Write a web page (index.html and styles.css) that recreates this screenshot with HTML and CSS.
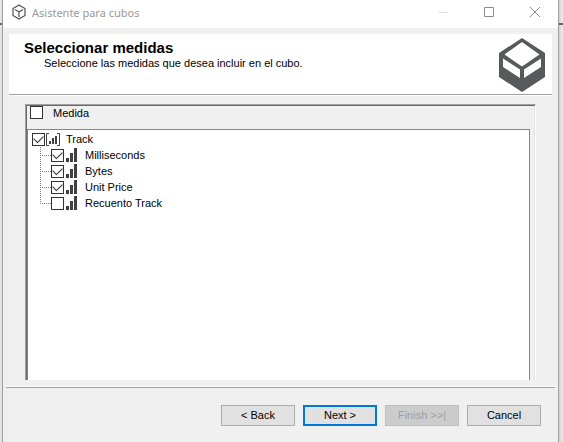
FILE: index.html
```html
<!DOCTYPE html>
<html lang="es">
<head>
<meta charset="utf-8">
<title>Asistente para cubos</title>
<link rel="stylesheet" href="styles.css">
</head>
<body>
<svg class="defs" aria-hidden="true">
  <symbol id="bars" viewBox="0 0 11 14"><path d="M0 10h3v4H0zM4 5h3v9H4zM8 0h3v14H8z" fill="#404040"/></symbol>
</svg>
<main class="window">
  <header class="titlebar">
    <svg class="app-icon" viewBox="0 0 14 16" aria-hidden="true"><path d="M7 1l6 3.500v7L7 15l-6-3.500v-7zM3 5.500L7 8l4-2.500M7 8v5" fill="none" stroke="#505050" stroke-width="1.200"/></svg>
    <h1 class="caption">Asistente para cubos</h1>
    <button class="sys" aria-label="Minimizar" disabled><svg viewBox="0 0 12 12"><path d="M1 6.500h10" stroke="#e2e2e2"/></svg></button>
    <button class="sys" aria-label="Maximizar"><svg viewBox="0 0 12 12"><path d="M1.500 1.500h9v9h-9z" fill="none" stroke="#8c8c8c"/></svg></button>
    <button class="sys" aria-label="Cerrar"><svg viewBox="0 0 12 12"><path d="M1 1l10 10M11 1L1 11" stroke="#8c8c8c"/></svg></button>
  </header>
  <section class="banner">
    <div class="banner-text">
      <h2>Seleccionar medidas</h2>
      <p>Seleccione las medidas que desea incluir en el cubo.</p>
    </div>
    <svg class="logo" viewBox="0 0 46 54" aria-hidden="true"><path d="M23 0l23 15v24L23 54 0 39V15z" fill="#58595b"/><path d="M23 4l17.500 12.500L23 28.500 5.500 16.500zM4 20.500l17 11V40L4 29zM42 20.500l-17 11V40l17-11z" fill="#fff"/></svg>
  </section>
  <section class="panel">
    <label class="panel-head"><input type="checkbox"><span>Medida</span></label>
    <div class="tree">
      <label class="node"><input type="checkbox" checked><svg class="group-icon" viewBox="0 0 15 13" aria-hidden="true"><path d="M3 .5H.5v12H3M11 .5h2.500v12H11" fill="none" stroke="#404040"/><path d="M3 8h2v3H3zM6 5h2v6H6zM9 3h2v8H9z" fill="#404040"/></svg><span>Track</span></label>
      <ul>
        <li><label class="node"><input type="checkbox" checked><svg class="bar-icon" aria-hidden="true"><use href="#bars"/></svg><span>Milliseconds</span></label></li>
        <li><label class="node"><input type="checkbox" checked><svg class="bar-icon" aria-hidden="true"><use href="#bars"/></svg><span>Bytes</span></label></li>
        <li><label class="node"><input type="checkbox" checked><svg class="bar-icon" aria-hidden="true"><use href="#bars"/></svg><span>Unit Price</span></label></li>
        <li><label class="node"><input type="checkbox"><svg class="bar-icon" aria-hidden="true"><use href="#bars"/></svg><span>Recuento Track</span></label></li>
      </ul>
    </div>
  </section>
  <footer class="actions">
    <button>&lt; Back</button>
    <button class="primary">Next &gt;</button>
    <button disabled>Finish &gt;&gt;|</button>
    <button>Cancel</button>
  </footer>
</main>
</body>
</html>
```
FILE: styles.css
```css
* { box-sizing: border-box; }

body {
  margin: 0;
  padding: 0 4px 0 2px;
  min-height: 100vh;
  display: flex;
  background: linear-gradient(#666, #666) 0 23px / 100% 2px no-repeat, linear-gradient(to left, #f0f0f0, #d0d0d0 4px, #e4e4e4 8px);
  font: 11px/13px "Liberation Sans", Arial, sans-serif;
  color: #000;
}

h1, h2, p, ul { margin: 0; padding: 0; }
ul { list-style: none; }
svg { display: block; flex: none; }
.defs { display: none; }

.window {
  flex: 1;
  display: flex;
  flex-direction: column;
  background: #f0f0f0;
  border: solid #a0a0a0;
  border-width: 0 1px;
}

.titlebar {
  display: flex;
  align-items: center;
  height: 28px;
  padding-left: 9px;
  background: #fff;
}
.app-icon { width: 14px; height: 16px; margin: 0 6px 4px 0; }
.caption {
  flex: 1;
  padding-bottom: 2px;
  font: 11px/16px "Noto Sans", sans-serif;
  color: #999;
}
.sys {
  width: 46px;
  height: 24px;
  margin-bottom: 4px;
  padding: 0;
  border: 0;
  background: none;
  display: grid;
  place-items: center;
}
.sys svg { width: 12px; height: 12px; }

.banner {
  display: flex;
  justify-content: space-between;
  height: 62px;
  margin: 6px 6px 0;
  padding: 4px 7px 0 15px;
  background: #fff;
  border-bottom: 1px solid #fff;
  box-shadow: inset 0 -1px #a0a0a0;
}
.banner h2 { padding-top: 2px; font-size: 15px; line-height: 16px; }
.banner p { padding-left: 20px; line-height: 14px; }
.logo { width: 46px; height: 54px; }

.panel {
  flex: 1;
  display: flex;
  flex-direction: column;
  margin: 8px 22px 6px;
  border: solid;
  border-color: #a0a0a0 #fff #fff #a0a0a0;
  border-width: 1px 1px 0;
  box-shadow: inset 1px 1px #696969, inset -1px 0 #e3e3e3;
  padding: 1px 5px 0 1px;
}
.panel-head { display: flex; gap: 10px; height: 23px; padding-left: 3px; }
.panel-head span { padding-top: 1px; }
.tree {
  flex: 1;
  padding: 1px 4px;
  background: #fff;
  border: solid #828790;
  border-width: 1px 1px 0;
}

input {
  appearance: none;
  flex: none;
  display: flex;
  align-items: flex-start;
  width: 13px;
  height: 13px;
  margin: 0;
  border: 1px solid #333;
  background: #fff;
}
input:checked::before {
  content: "";
  width: 9px;
  height: 5px;
  margin: 2px 1px 0;
  border: solid #333;
  border-width: 0 0 1px 1px;
  transform: translateY(-1px) rotate(-45deg);
}

.node { display: flex; align-items: center; height: 16px; }
.group-icon { width: 15px; height: 13px; margin: 0 5px 0 1px; }
.bar-icon { width: 11px; height: 14px; margin: 0 8px 0 2px; }
.tree li {
  margin-left: 8px;
  padding-left: 11px;
  background:
    repeating-linear-gradient(#808080 0 1px, transparent 1px 2px) 0 0 / 1px 100% no-repeat,
    repeating-linear-gradient(to right, #808080 0 1px, transparent 1px 2px) 0 8px / 11px 1px no-repeat;
}
.tree li:last-child { background-size: 1px 8px, 11px 1px; }

.actions {
  display: flex;
  justify-content: flex-end;
  gap: 8px;
  height: 56px;
  margin: 0 3px;
  padding: 18px 14px 0 0;
  border-top: 1px solid #fff;
  box-shadow: inset 0 1px #a0a0a0;
}
.actions button {
  width: 74px;
  height: 21px;
  padding: 0;
  border: 1px solid #adadad;
  background: #e1e1e1;
  font: inherit;
  color: #000;
}
.actions .primary { border: 2px solid #0078d7; }
.actions button:disabled { background: #ccc; border-color: #bfbfbf; color: #a0a0a0; }
```
